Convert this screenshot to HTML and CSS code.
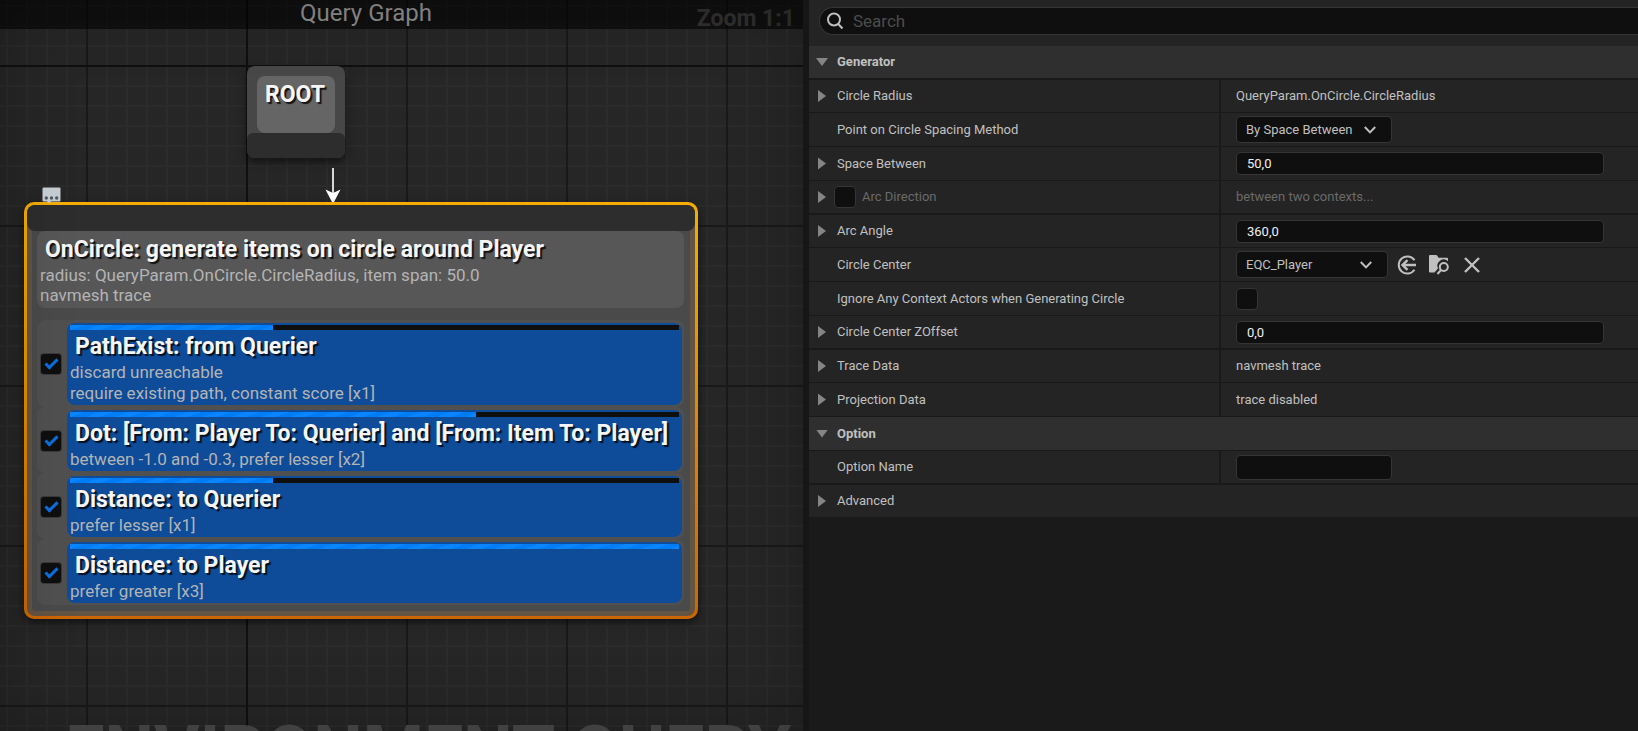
FILE: index.html
```html
<!DOCTYPE html>
<html lang="en">
<head>
<meta charset="utf-8">
<title>Environment Query Editor</title>
<link rel="stylesheet" href="styles.css">
</head>
<body>
<div class="editor">
  <main class="graph">
    <div class="watermark">ENVIRONMENT QUERY</div>
    <header class="graph-bar">
      <h1 class="graph-title">Query Graph</h1>
    </header>
    <span class="zoom-level">Zoom 1:1</span>

    <section class="node node-root">
      <div class="node-root-body"><h2 class="node-title">ROOT</h2></div>
      <div class="node-pin"></div>
    </section>

    <svg class="wire" width="16" height="36" viewBox="0 0 16 36" aria-hidden="true">
      <path d="M8 0V26" stroke="#d8d8d8" stroke-width="2"/>
      <path d="M0.500 21.500L8 25L15.500 21.500L8 36Z" fill="#fff"/>
    </svg>

    <button class="comment-bubble" aria-label="Toggle comment">
      <svg width="20" height="17" viewBox="0 0 20 17">
        <path d="M1.500 0.500H17.500Q18.500 0.500 18.500 1.500V13.500Q18.500 14.500 17.500 14.500H9L7 16.500L5 14.500H1.500Q0.500 14.500 0.500 13.500V1.500Q0.500 0.500 1.500 0.500Z" fill="#c3cad0"/>
        <circle cx="4.300" cy="11" r="1.700" fill="#4d5862"/><circle cx="9.500" cy="11" r="1.700" fill="#4d5862"/><circle cx="14.700" cy="11" r="1.700" fill="#4d5862"/>
      </svg>
    </button>

    <section class="node node-option">
      <div class="node-inner">
        <div class="node-pin"></div>
        <div class="summary">
          <h2 class="node-title">OnCircle: generate items on circle around Player</h2>
          <p class="node-text">radius: QueryParam.OnCircle.CircleRadius, item span: 50.0</p>
          <p class="node-text">navmesh trace</p>
        </div>
        <ul class="tests">
          <li class="test">
            <input class="check" type="checkbox" checked aria-label="Enable PathExist">
            <div class="test-card">
              <div class="weight"><div class="weight-fill" style="width:33.3%"></div></div>
              <h3 class="node-title">PathExist: from Querier</h3>
              <p class="node-text">discard unreachable</p>
              <p class="node-text">require existing path, constant score [x1]</p>
            </div>
          </li>
          <li class="test">
            <input class="check" type="checkbox" checked aria-label="Enable Dot">
            <div class="test-card">
              <div class="weight"><div class="weight-fill" style="width:66.7%"></div></div>
              <h3 class="node-title">Dot: [From: Player To: Querier] and [From: Item To: Player]</h3>
              <p class="node-text">between -1.0 and -0.3, prefer lesser [x2]</p>
            </div>
          </li>
          <li class="test">
            <input class="check" type="checkbox" checked aria-label="Enable Distance to Querier">
            <div class="test-card">
              <div class="weight"><div class="weight-fill" style="width:33.3%"></div></div>
              <h3 class="node-title">Distance: to Querier</h3>
              <p class="node-text">prefer lesser [x1]</p>
            </div>
          </li>
          <li class="test">
            <input class="check" type="checkbox" checked aria-label="Enable Distance to Player">
            <div class="test-card">
              <div class="weight"><div class="weight-fill" style="width:100%"></div></div>
              <h3 class="node-title">Distance: to Player</h3>
              <p class="node-text">prefer greater [x3]</p>
            </div>
          </li>
        </ul>
      </div>
    </section>
  </main>

  <aside class="details">
    <div class="search-bar">
      <label class="search">
        <svg width="18" height="18" viewBox="0 0 18 18" fill="none" stroke="#c0c0c0" stroke-width="2" aria-hidden="true"><circle cx="8" cy="7.500" r="6"/><path d="M12.200 12L16.500 16.500"/></svg>
        <input class="search-input" type="search" placeholder="Search" aria-label="Search">
      </label>
    </div>

    <div class="props">
      <div class="row section">
        <button class="expander open" aria-label="Collapse Generator"></button>
        <h2 class="section-title">Generator</h2>
      </div>
      <div class="row">
        <div class="name"><button class="expander" aria-label="Expand Circle Radius"></button><span>Circle Radius</span></div>
        <div class="value">QueryParam.OnCircle.CircleRadius</div>
      </div>
      <div class="row">
        <div class="name"><span class="expander-space"></span><label for="spacing">Point on Circle Spacing Method</label></div>
        <div class="value"><div class="combo combo-method">
          <select id="spacing"><option>By Space Between</option></select>
          <svg class="chevron" width="12" height="8" viewBox="0 0 12 8" aria-hidden="true"><path d="M0.800 1L6 6.400L11.200 1"/></svg>
        </div></div>
      </div>
      <div class="row">
        <div class="name"><button class="expander" aria-label="Expand Space Between"></button><label for="space">Space Between</label></div>
        <div class="value"><input class="field" id="space" type="text" value="50,0"></div>
      </div>
      <div class="row muted">
        <div class="name"><button class="expander" aria-label="Expand Arc Direction"></button><input class="box box-inline" id="arcdir" type="checkbox"><label for="arcdir">Arc Direction</label></div>
        <div class="value">between two contexts...</div>
      </div>
      <div class="row">
        <div class="name"><button class="expander" aria-label="Expand Arc Angle"></button><label for="angle">Arc Angle</label></div>
        <div class="value"><input class="field" id="angle" type="text" value="360,0"></div>
      </div>
      <div class="row">
        <div class="name"><span class="expander-space"></span><label for="center">Circle Center</label></div>
        <div class="value"><div class="combo combo-asset">
          <select id="center"><option>EQC_Player</option></select>
          <svg class="chevron" width="12" height="8" viewBox="0 0 12 8" aria-hidden="true"><path d="M0.800 1L6 6.400L11.200 1"/></svg>
        </div>
          <div class="actions">
            <button class="action" aria-label="Use selected asset"><svg width="20" height="20" viewBox="0 0 20 20" fill="none" stroke="#c0c0c0" stroke-width="2"><path d="M17.500 5.200A8.600 8.600 0 1 0 17.500 14.800" stroke-width="2"/><path d="M19 10H6M10.500 5.200L5.500 10L10.500 14.800" stroke-width="2.400"/></svg></button>
            <button class="action" aria-label="Browse to asset"><svg width="20" height="20" viewBox="0 0 20 20"><path d="M0 1Q0 0 1 0H7Q8 0 8.500 1L9.500 2.800H18Q19 2.800 19 3.800V6.200A6.300 6.300 0 0 0 9 13.500L5.500 17.500H1Q0 17.500 0 16.500Z" fill="#c0c0c0"/><circle cx="14.800" cy="12" r="4" fill="none" stroke="#c0c0c0" stroke-width="2"/><path d="M12 15L8.500 19" stroke="#c0c0c0" stroke-width="2"/></svg></button>
            <button class="action" aria-label="Clear"><svg width="20" height="20" viewBox="0 0 20 20" fill="none" stroke="#c0c0c0" stroke-width="2.400"><path d="M4 3L18 17M18 3L4 17"/></svg></button>
          </div>
        </div>
      </div>
      <div class="row">
        <div class="name"><span class="expander-space"></span><label for="ignore">Ignore Any Context Actors when Generating Circle</label></div>
        <div class="value"><input class="box" id="ignore" type="checkbox"></div>
      </div>
      <div class="row">
        <div class="name"><button class="expander" aria-label="Expand Circle Center ZOffset"></button><label for="zoffset">Circle Center ZOffset</label></div>
        <div class="value"><input class="field" id="zoffset" type="text" value="0,0"></div>
      </div>
      <div class="row">
        <div class="name"><button class="expander" aria-label="Expand Trace Data"></button><span>Trace Data</span></div>
        <div class="value">navmesh trace</div>
      </div>
      <div class="row">
        <div class="name"><button class="expander" aria-label="Expand Projection Data"></button><span>Projection Data</span></div>
        <div class="value">trace disabled</div>
      </div>
      <div class="row section">
        <button class="expander open" aria-label="Collapse Option"></button>
        <h2 class="section-title">Option</h2>
      </div>
      <div class="row">
        <div class="name"><span class="expander-space"></span><label for="optname">Option Name</label></div>
        <div class="value"><input class="field field-short" id="optname" type="text"></div>
      </div>
      <div class="row advanced">
        <div class="name"><button class="expander" aria-label="Expand Advanced"></button><span>Advanced</span></div>
      </div>
    </div>
  </aside>
</div>
</body>
</html>
```
FILE: styles.css
```css
* { box-sizing: border-box; }

body {
  margin: 0;
  background: #161616;
  color: #c0c0c0;
  font: 13px/16px Roboto, "Liberation Sans", sans-serif;
}

h1, h2, h3, p, ul { margin: 0; padding: 0; }
button { padding: 0; border: 0; background: none; }
svg { display: block; }

.editor {
  display: grid;
  grid-template-columns: 803fr 829fr;
  column-gap: 6px;
  height: 100vh;
  overflow: hidden;
}

/* Graph canvas */
.graph {
  position: relative;
  overflow: hidden;
  background-color: #262626;
  background-image:
    linear-gradient(90deg, #101010 2px, transparent 2px),
    linear-gradient(#101010 2px, transparent 2px),
    linear-gradient(90deg, #191919 2px, transparent 2px),
    linear-gradient(#191919 2px, transparent 2px),
    linear-gradient(90deg, #2b2b2b 2px, transparent 2px),
    linear-gradient(#2b2b2b 2px, transparent 2px);
  background-size: 1280px 100%, 100% 1280px, 160px 160px, 160px 160px, 20px 20px, 20px 20px;
  background-position: 246px 0, 0 65px, 86px 65px, 86px 65px, 6px 5px, 6px 5px;
}

.graph::after {
  content: "";
  position: absolute;
  inset: 0;
  box-shadow: inset 0 0 70px rgba(0, 0, 0, 0.25);
  pointer-events: none;
}

.graph-bar {
  height: 29px;
  background: rgba(0, 0, 0, 0.6);
  text-align: center;
}

.graph-title {
  padding-right: 71px;
  color: #8c8c8c;
  font-size: 24px;
  font-weight: 400;
  line-height: 26px;
}

.zoom-level {
  position: absolute;
  top: 5px;
  right: 8px;
  color: #303030;
  font-size: 23px;
  font-weight: 700;
  line-height: 28px;
}

.watermark {
  position: absolute;
  top: 711px;
  right: 12px;
  color: #4a4a4a;
  font-size: 70px;
  font-weight: 700;
  line-height: 80px;
  white-space: nowrap;
}

.node { position: absolute; }

.node-root {
  left: 247px;
  top: 66px;
  width: 98px;
  padding-top: 10px;
  border-radius: 8px;
  background: #474747;
  box-shadow: 0 4px 8px rgba(0, 0, 0, 0.5);
}

.node-root-body {
  height: 57px;
  margin: 0 10px;
  padding-top: 2px;
  border-radius: 8px;
  background: #656565;
}

.node-pin {
  height: 25px;
  border-radius: 6px 6px 8px 8px;
  background: #2d2d2d;
}

.node-title {
  height: 32px;
  padding: 0 8px;
  color: #f5f5f5;
  font-size: 23px;
  font-weight: 700;
  line-height: 34px;
  text-shadow: 2px 2px 1px rgba(0, 0, 0, 0.8);
  white-space: nowrap;
}

.node-text {
  padding-left: 3px;
  color: #b4b4b4;
  font-size: 17px;
  line-height: 20px;
}

.wire { position: absolute; left: 325px; top: 168px; }
.comment-bubble { position: absolute; left: 42px; top: 187px; z-index: 1; }

.node-option {
  left: 24px;
  top: 202px;
  width: 674px;
  padding: 3px;
  border-radius: 10px;
  background: linear-gradient(#f5ae00, #cc6600);
  box-shadow: 0 4px 8px rgba(0, 0, 0, 0.5);
}

.node-inner {
  padding: 0 11px 11px 10px;
  border-radius: 8px;
  background: #4a4a4a;
  box-shadow: inset 0 0 0 5px rgba(190, 125, 45, 0.22);
}

.node-inner .node-pin {
  height: 26px;
  margin: 0 -11px 0 -10px;
  border-radius: 8px;
}

.summary {
  padding: 2px 0 3px;
  border-radius: 8px;
  background: #575757;
}

.tests {
  margin-top: 12px;
  list-style: none;
}

.test {
  display: flex;
  align-items: center;
  gap: 6px;
  padding: 3px 2px 2px 4px;
  border-radius: 8px;
  background: #505050;
}

.check {
  flex: none;
  width: 20px;
  height: 20px;
  margin: 0;
  appearance: none;
  border-radius: 3px;
  background: #0f0f0f;
  box-shadow: 0 0 0 1px #3a3a3a;
}

.check:checked::before {
  content: "";
  display: block;
  width: 10px;
  height: 4px;
  margin: 5px 0 0 4px;
  border: solid #0a70e0;
  border-width: 0 0 3px 3px;
  transform: rotate(-45deg);
}

.test-card {
  flex: 1;
  min-width: 0;
  padding-bottom: 1px;
  border-radius: 8px;
  background: #0e4c99;
}

.test-card .node-text { line-height: 21px; }

.weight {
  height: 7px;
  margin: 0 3px;
  padding-top: 2px;
  background: linear-gradient(transparent 2px, #0f0f0f 2px);
}

.weight-fill {
  height: 5px;
  background: repeating-linear-gradient(160deg, #0a84ff 0 5px, #007cf4 5px 10px);
}

/* Details panel */
.details {
  overflow: hidden;
  background: #1a1a1a;
}

.search-bar {
  padding: 7px 0 11px 10px;
  background: #242424;
}

.search {
  display: flex;
  align-items: center;
  gap: 9px;
  height: 28px;
  padding-left: 6px;
  border: 1px solid #353535;
  border-right: 0;
  border-radius: 14px 0 0 14px;
  background: #0f0f0f;
}

.search-input {
  flex: 1;
  min-width: 0;
  padding: 0;
  border: 0;
  outline: 0;
  background: none;
  color: #c0c0c0;
  font: 17px/20px Roboto, "Liberation Sans", sans-serif;
}

.search-input::placeholder { color: #4c4c4c; }

.row {
  display: grid;
  grid-template-columns: 412fr 417fr;
  height: 34px;
  border-bottom: 1px solid #191919;
  background: #242424;
}

.row:nth-child(4n+1) { border-bottom-width: 2px; }
.row:nth-child(4n+2) { height: 33px; }

.row.section {
  display: flex;
  align-items: center;
  padding-left: 7px;
  background: #2f2f2f;
}

.row.advanced { border-bottom: 0; height: 32px; }

.section-title {
  font-size: 13px;
  font-weight: 700;
  line-height: 16px;
}

.name, .value {
  display: flex;
  align-items: center;
  min-width: 0;
}

.name {
  padding-left: 7px;
  border-right: 2px solid #191919;
}

.advanced .name { border-right: 0; }
.value { padding: 0 34px 0 15px; }
.muted { color: #6a6a6a; }

.expander, .expander-space {
  flex: none;
  width: 12px;
  height: 12px;
  margin-right: 9px;
}

.expander::before {
  content: "";
  display: block;
  width: 8px;
  height: 12px;
  margin-left: 2px;
  background: #858585;
  clip-path: polygon(0 0, 100% 50%, 0 100%);
}

.expander.open::before {
  width: 12px;
  height: 8px;
  margin-left: 0;
  clip-path: polygon(0 0, 100% 0, 50% 100%);
}

.field, .box, .combo {
  border: 1px solid #353535;
  border-radius: 4px;
  background: #0f0f0f;
}

.field {
  width: 100%;
  height: 23px;
  padding: 0 10px;
  outline: 0;
  color: #f0f0f0;
  font: inherit;
}

.field-short { width: 156px; height: 25px; }

.box {
  width: 22px;
  height: 22px;
  margin: 0;
  appearance: none;
}

.box-inline { margin: 0 6px 0 -3px; }

.combo {
  display: grid;
  align-items: center;
  height: 27px;
}

.combo-method { width: 156px; }
.combo-asset { width: 152px; }

.combo select, .chevron { grid-area: 1 / 1; }

.combo select {
  height: 25px;
  padding: 0 30px 0 9px;
  border: 0;
  outline: 0;
  appearance: none;
  background: none;
  color: #c0c0c0;
  font: inherit;
}

.chevron {
  justify-self: end;
  margin-right: 15px;
  fill: none;
  stroke: #c0c0c0;
  stroke-width: 2;
  pointer-events: none;
}

.actions {
  display: flex;
  gap: 12px;
  margin-left: 9px;
}
```
